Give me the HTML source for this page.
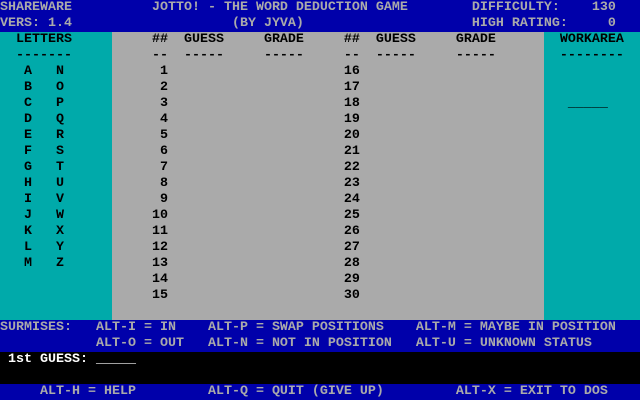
<!DOCTYPE html>
<html><head><meta charset="utf-8"><style>
html,body{margin:0;padding:0;width:640px;height:400px;overflow:hidden;background:#000}
.r{position:absolute}
.t{position:absolute;font-family:"Liberation Mono",monospace;font-size:13.34px;font-weight:bold;line-height:16px;height:16px;white-space:pre;letter-spacing:0}
.g{color:#aaa}.k{color:#000}.w{color:#fff}
</style></head><body>
<div class="r" style="left:0;top:0;width:640px;height:32px;background:#0000aa"></div>
<div class="r" style="left:0;top:32px;width:112px;height:288px;background:#00aaaa"></div>
<div class="r" style="left:112px;top:32px;width:432px;height:288px;background:#aaaaaa"></div>
<div class="r" style="left:544px;top:32px;width:96px;height:288px;background:#00aaaa"></div>
<div class="r" style="left:0;top:320px;width:640px;height:32px;background:#0000aa"></div>
<div class="r" style="left:0;top:352px;width:640px;height:32px;background:#000"></div>
<div class="r" style="left:0;top:384px;width:640px;height:16px;background:#0000aa"></div>

<div class="t g" style="left:0;top:0">SHAREWARE          JOTTO! - THE WORD DEDUCTION GAME        DIFFICULTY:    130</div>
<div class="t g" style="left:0;top:16px">VERS: 1.4                    (BY JYVA)                     HIGH RATING:     0</div>

<div class="t k" style="left:0;top:32px">  LETTERS          ##  GUESS     GRADE     ##  GUESS     GRADE        WORKAREA</div>
<div class="t k" style="left:0;top:48px">  -------          --  -----     -----     --  -----     -----        --------</div>
<div class="t k" style="left:0;top:64px">   A   N            1                      16</div>
<div class="t k" style="left:0;top:80px">   B   O            2                      17</div>
<div class="t k" style="left:0;top:96px">   C   P            3                      18                          _____</div>
<div class="t k" style="left:0;top:112px">   D   Q            4                      19</div>
<div class="t k" style="left:0;top:128px">   E   R            5                      20</div>
<div class="t k" style="left:0;top:144px">   F   S            6                      21</div>
<div class="t k" style="left:0;top:160px">   G   T            7                      22</div>
<div class="t k" style="left:0;top:176px">   H   U            8                      23</div>
<div class="t k" style="left:0;top:192px">   I   V            9                      24</div>
<div class="t k" style="left:0;top:208px">   J   W           10                      25</div>
<div class="t k" style="left:0;top:224px">   K   X           11                      26</div>
<div class="t k" style="left:0;top:240px">   L   Y           12                      27</div>
<div class="t k" style="left:0;top:256px">   M   Z           13                      28</div>
<div class="t k" style="left:0;top:272px">                   14                      29</div>
<div class="t k" style="left:0;top:288px">                   15                      30</div>

<div class="t g" style="left:0;top:320px">SURMISES:   ALT-I = IN    ALT-P = SWAP POSITIONS    ALT-M = MAYBE IN POSITION</div>
<div class="t g" style="left:0;top:336px">            ALT-O = OUT   ALT-N = NOT IN POSITION   ALT-U = UNKNOWN STATUS</div>
<div class="t w" style="left:0;top:352px"> 1st GUESS: _____</div>
<div class="t g" style="left:0;top:384px">     ALT-H = HELP         ALT-Q = QUIT (GIVE UP)         ALT-X = EXIT TO DOS</div>
</body></html>
